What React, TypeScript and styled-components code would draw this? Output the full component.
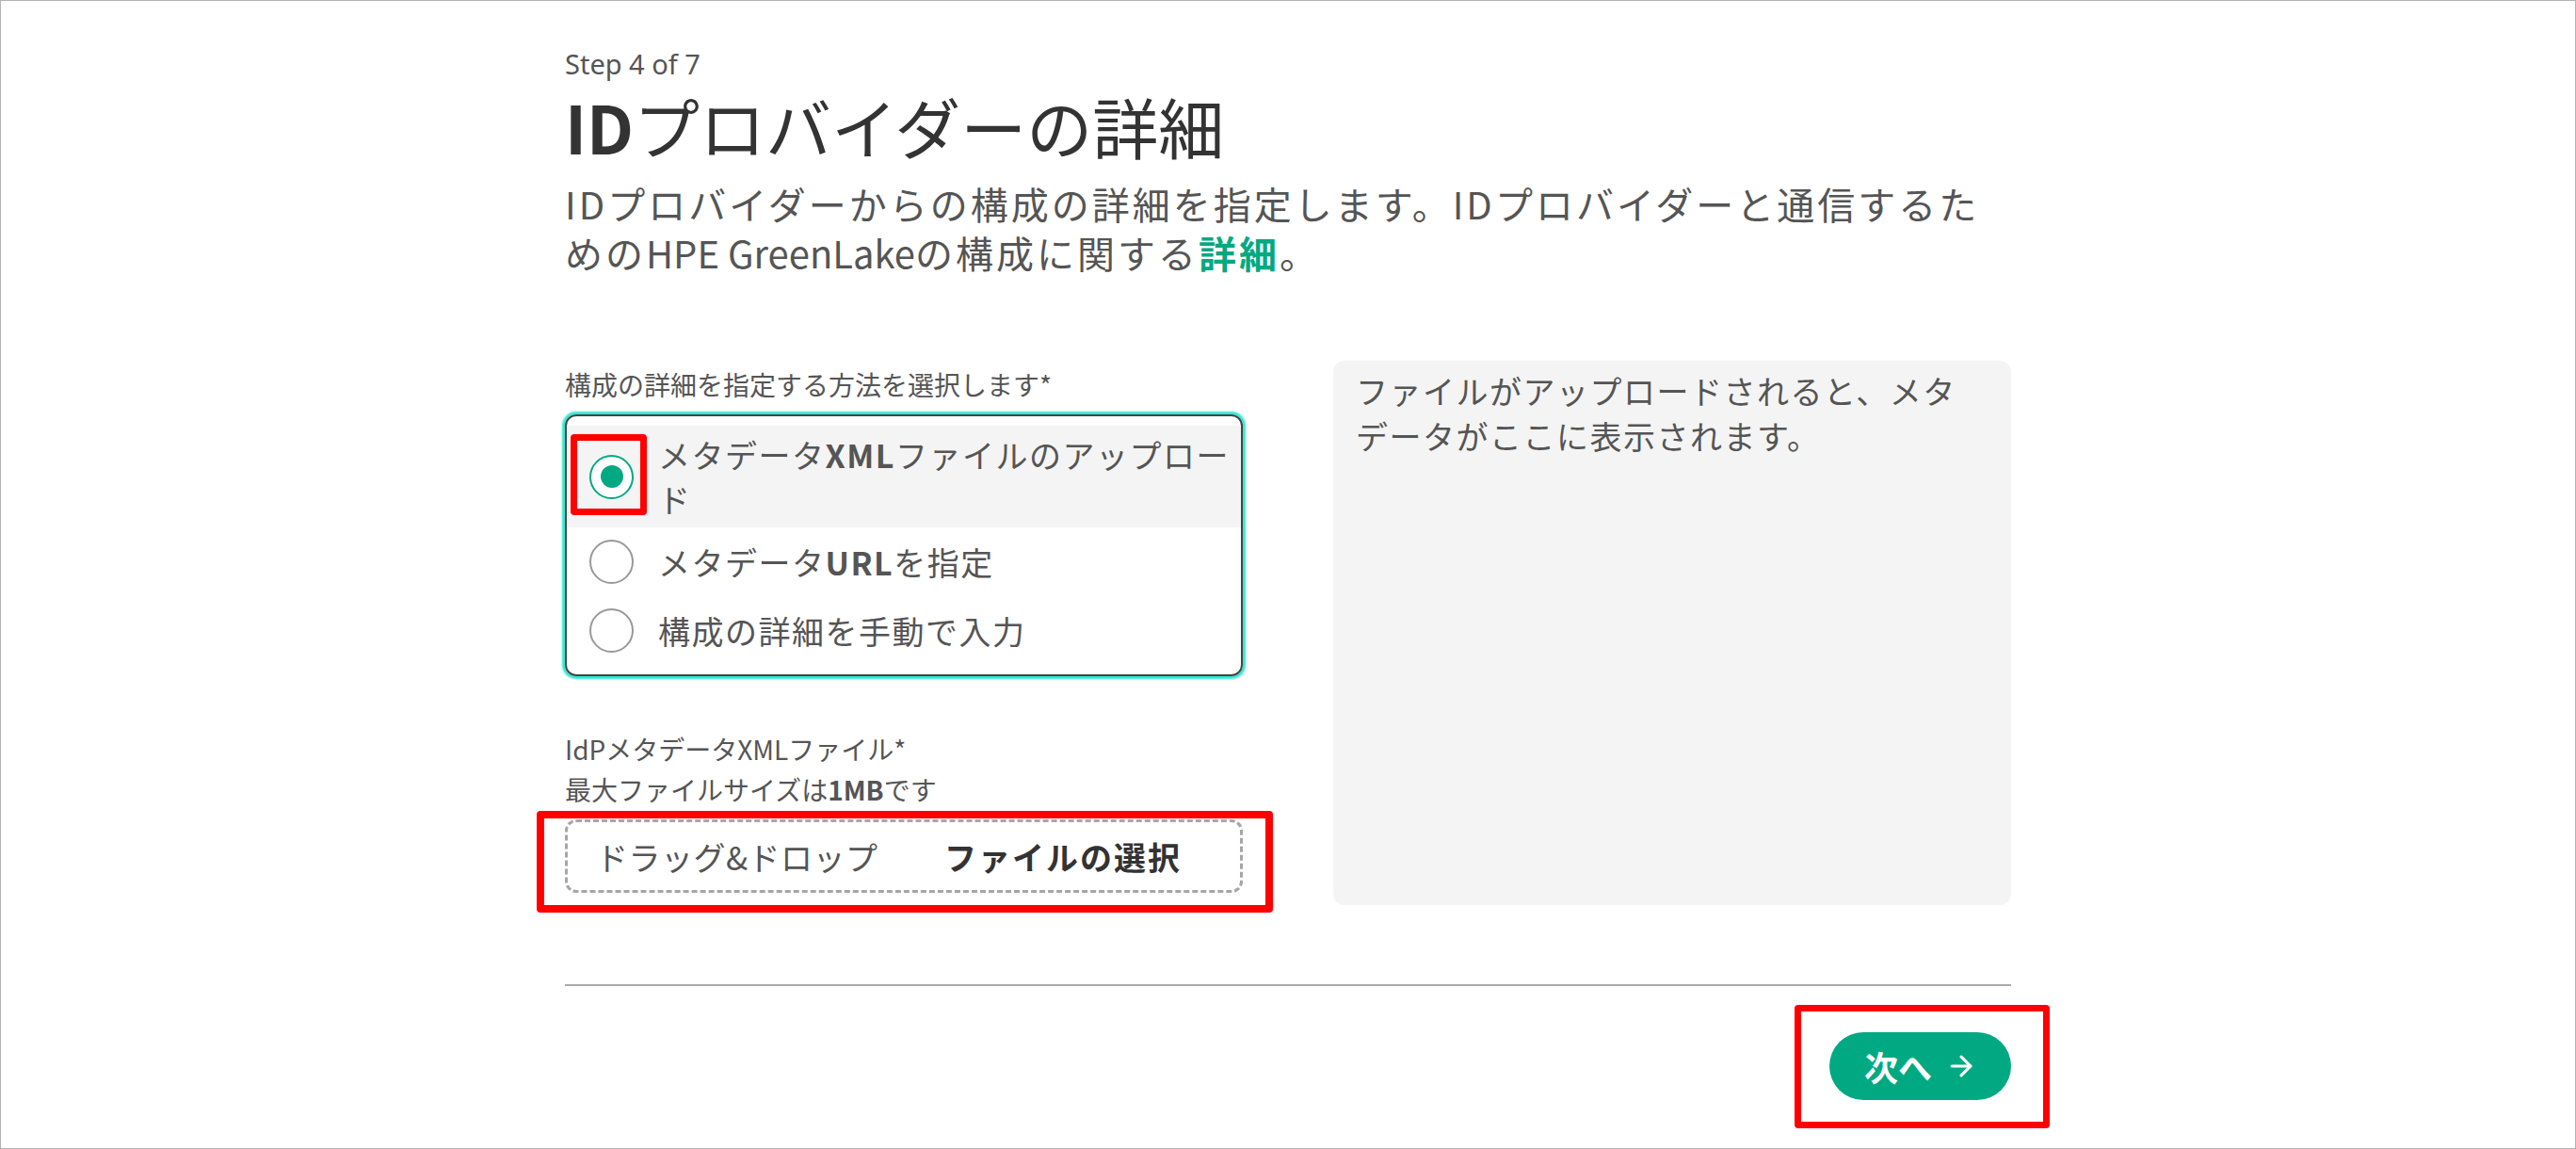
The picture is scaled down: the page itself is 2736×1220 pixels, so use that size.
import { createGlobalStyle, styled } from 'styled-components';
import { ArrowRight } from 'lucide-react';

const GREEN = '#01a982';
const TEXT = '#555555';

type Inset = { top: number; right: number; bottom: number; left: number };

// 構成の詳細の指定方法 (latin は太めに表示する部分)
const METHODS = [
  { id: 'upload', checked: true, before: 'メタデータ', latin: 'XML', after: 'ファイルのアップロード' },
  { id: 'url', checked: false, before: 'メタデータ', latin: 'URL', after: 'を指定' },
  { id: 'manual', checked: false, before: '構成の詳細を手動で入力', latin: '', after: '' },
];

function App() {
  return (
    <>
      <GlobalStyle />
      <Frame>
        <Wizard>
          <header>
            <StepLabel>Step 4 of 7</StepLabel>
            <Title>
              <Latin>ID</Latin>プロバイダーの詳細
            </Title>
            <Intro>
              IDプロバイダーからの構成の詳細を指定します。IDプロバイダーと通信するための
              <Brand>HPE GreenLake</Brand>の構成に関する
              <IntroLink href="#">詳細</IntroLink>。
            </Intro>
          </header>

          <FormGrid>
            <FormColumn>
              <FieldLabel>構成の詳細を指定する方法を選択します*</FieldLabel>
              <RadioGroup role="radiogroup">
                {METHODS.map((method) => (
                  <RadioRow key={method.id} $checked={method.checked}>
                    {method.checked ? (
                      <Marked>
                        <Radio $checked />
                        <Callout $inset={{ top: -16, right: -14, bottom: -11, left: -20 }} />
                      </Marked>
                    ) : (
                      <Radio $checked={false} />
                    )}
                    <RadioText>
                      {method.before}
                      {method.latin && <Latin>{method.latin}</Latin>}
                      {method.after}
                    </RadioText>
                  </RadioRow>
                ))}
              </RadioGroup>

              <FileLabel>IdPメタデータXMLファイル*</FileLabel>
              <FieldLabel>
                最大ファイルサイズは<Latin>1MB</Latin>です
              </FieldLabel>

              <DropWrap>
                <DropZone>
                  <DropHint>ドラッグ&amp;ドロップ</DropHint>
                  <BrowseButton type="button">ファイルの選択</BrowseButton>
                </DropZone>
                <Callout $inset={{ top: -9, right: -32, bottom: -21, left: -30 }} $weight={8} />
              </DropWrap>
            </FormColumn>

            <Preview>ファイルがアップロードされると、メタデータがここに表示されます。</Preview>
          </FormGrid>

          <Divider />

          <Footer>
            <Marked>
              <NextButton type="button">
                次へ
                <ArrowRight size={34} strokeWidth={2.2} />
              </NextButton>
              <Callout $inset={{ top: -29, right: -41, bottom: -30, left: -37 }} />
            </Marked>
          </Footer>
        </Wizard>
      </Frame>
    </>
  );
}

export default App;


const GlobalStyle = createGlobalStyle`
html, body {
  margin: 0;
  background: #ffffff;
}

body {
  font-family: "Noto Sans CJK JP", "Noto Sans", sans-serif;
  color: ${TEXT};
}

* {
  box-sizing: border-box;
}
`;

const Frame = styled.div`
height: 100vh;
border: 1px solid #b3b3b3;
overflow: hidden;
`;

const Wizard = styled.div`
width: 1536px;
margin: 0 auto;
padding-top: 49px;
`;

const StepLabel = styled.div`
font-family: "Noto Sans", sans-serif;
font-size: 29px;
line-height: 36px;
color: ${TEXT};
`;

const Title = styled.h1`
margin: 8px 0 0;
font-size: 70px;
line-height: 80px;
font-weight: 400;
color: #333333;
`;

const Latin = styled.span`
font-weight: 700;
`;

const Intro = styled.p`
max-width: 1520px;
margin: 16px 0 0;
font-size: 40px;
line-height: 52px;
letter-spacing: 3px;
color: ${TEXT};
`;

const Brand = styled.span`
letter-spacing: 0;
`;

const IntroLink = styled.a`
color: ${GREEN};
font-weight: 700;
text-decoration: none;
`;

const FormGrid = styled.div`
display: grid;
grid-template-columns: 720px 720px;
column-gap: 96px;
margin-top: 89px;
`;

const FormColumn = styled.div`
display: flex;
flex-direction: column;
padding: 4px 0 13px;
`;

const FieldLabel = styled.div`
font-size: 28px;
line-height: 43px;
color: ${TEXT};
`;

const FileLabel = styled(FieldLabel)`
margin-top: 56px;
`;

const RadioGroup = styled.div`
margin-top: 10px;
padding: 10px 0;
border: 2px solid #444444;
border-radius: 12px;
box-shadow: 0 0 2px 3px #2ee8d2;
`;

const RadioRow = styled.label<{ $checked: boolean }>`
display: flex;
align-items: center;
column-gap: 26px;
padding: 7px 0 7px 24px;
background: ${({ $checked }) => ($checked ? '#f4f4f4' : 'transparent')};
cursor: pointer;
`;

const Radio = styled.span<{ $checked: boolean }>`
position: relative;
flex: none;
display: block;
width: 47px;
height: 47px;
margin: 6px 0;
border-radius: 50%;
border: 2px solid ${({ $checked }) => ($checked ? GREEN : '#999999')};
background: #ffffff;

&::after {
  content: '';
  display: ${({ $checked }) => ($checked ? 'block' : 'none')};
  position: absolute;
  top: 50%;
  left: 50%;
  width: 24px;
  height: 24px;
  margin: -12px 0 0 -12px;
  border-radius: 50%;
  background: ${GREEN};
}
`;

const RadioText = styled.span`
font-size: 34px;
line-height: 47px;
letter-spacing: 1.5px;
color: ${TEXT};
`;

const Marked = styled.span`
position: relative;
display: inline-flex;
flex: none;
`;

/* 赤枠の注記 */
const Callout = styled.span<{ $inset: Inset; $weight?: number }>`
position: absolute;
top: ${({ $inset }) => $inset.top}px;
right: ${({ $inset }) => $inset.right}px;
bottom: ${({ $inset }) => $inset.bottom}px;
left: ${({ $inset }) => $inset.left}px;
border: ${({ $weight = 7 }) => $weight}px solid #ff0000;
border-radius: 4px;
pointer-events: none;
`;

const DropWrap = styled.div`
position: relative;
margin-top: 10px;
`;

const DropZone = styled.div`
display: flex;
align-items: center;
justify-content: space-between;
height: 78px;
padding: 0 26px 0 30px;
border: 3px dashed #a6a6a6;
border-radius: 12px;
`;

const DropHint = styled.span`
font-size: 34px;
letter-spacing: 0.5px;
color: ${TEXT};
`;

const BrowseButton = styled.button`
padding: 0 36px;
border: none;
background: transparent;
font-family: inherit;
font-size: 34px;
font-weight: 700;
letter-spacing: 2px;
color: #333333;
`;

const Preview = styled.div`
padding: 8px 28px 8px 24px;
border-radius: 12px;
background: #f4f4f4;
font-size: 34px;
line-height: 48px;
letter-spacing: 1.5px;
color: ${TEXT};
`;

const Divider = styled.hr`
margin: 84px 0 0;
height: 2px;
border: none;
background: #a9a9a9;
`;

const Footer = styled.div`
display: flex;
justify-content: flex-end;
padding-top: 49px;
`;

const NextButton = styled.button`
display: inline-flex;
align-items: center;
column-gap: 14px;
height: 72px;
padding: 0 36px 0 37px;
border: none;
border-radius: 36px;
background: ${GREEN};
font-family: inherit;
font-size: 36px;
font-weight: 700;
color: #ffffff;
`;
